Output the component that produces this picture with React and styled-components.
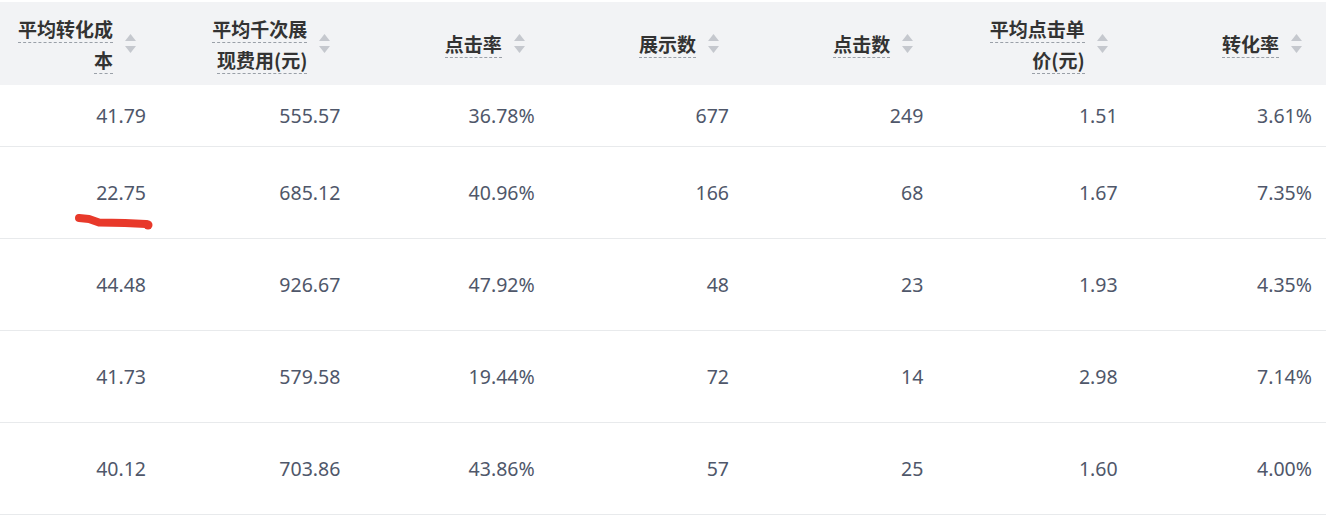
import styled, { createGlobalStyle } from 'styled-components'

const GlobalStyle = createGlobalStyle`
  html, body {
    margin: 0;
    padding: 0;
    background: #ffffff;
  }
  body {
    font-family: "Noto Sans", "Noto Sans CJK SC", sans-serif;
  }
`;

const Wrapper = styled.div`
  width: 1326px;
  padding-top: 2px;
  background: #ffffff;
  overflow: hidden;
`;

const Row = styled.div`
  display: grid;
  grid-template-columns: 160px repeat(6, 1fr);
  height: ${(props) => props.h}px;
  box-sizing: border-box;
  border-bottom: 1px solid #e8eaec;
`;

const HeaderRow = styled(Row)`
  background: #f2f3f5;
  border-bottom: none;
`;

const HeaderCell = styled.div`
  display: flex;
  flex-direction: row;
  align-items: center;
  justify-content: flex-end;
  gap: 12px;
  padding-right: 24px;
`;

const Label = styled.div`
  max-width: 100px;
  text-align: right;
  font-family: "Noto Sans CJK SC", "Noto Sans", sans-serif;
  font-size: 19px;
  font-weight: 700;
  line-height: 31px;
  color: #333333;
  & span {
    border-bottom: 1px dashed #9aa0a8;
  }
`;

const Cell = styled.div`
  position: relative;
  display: flex;
  align-items: center;
  justify-content: flex-end;
  padding-right: 14px;
  font-family: "Noto Sans", "Noto Sans CJK SC", sans-serif;
  font-size: 19.5px;
  color: #4f576a;
`;

const Mark = styled.svg`
  position: absolute;
  left: 0;
  top: 0;
  pointer-events: none;
`;

const Sorter = () => (
  <svg width="11" height="19" viewBox="0 0 11 19">
    <polygon points="5.5,0 11,7 0,7" fill="#c5c8ce" />
    <polygon points="0,12 11,12 5.5,19" fill="#c5c8ce" />
  </svg>
)

const columns = ['平均转化成本', '平均千次展现费用(元)', '点击率', '展示数', '点击数', '平均点击单价(元)', '转化率'];

const rows = [
  ['41.79', '555.57', '36.78%', '677', '249', '1.51', '3.61%'],
  ['22.75', '685.12', '40.96%', '166', '68', '1.67', '7.35%'],
  ['44.48', '926.67', '47.92%', '48', '23', '1.93', '4.35%'],
  ['41.73', '579.58', '19.44%', '72', '14', '2.98', '7.14%'],
  ['40.12', '703.86', '43.86%', '57', '25', '1.60', '4.00%'],
];

const heights = [62, 92, 92, 92, 92];

const App = () => {
  return (
    <Wrapper>
      <GlobalStyle />
      <HeaderRow h={83}>
        {columns.map((title) => (
          <HeaderCell key={title}>
            <Label><span>{title}</span></Label>
            <Sorter />
          </HeaderCell>
        ))}
      </HeaderRow>
      {rows.map((row, i) => (
        <Row key={i} h={heights[i]}>
          {row.map((value, j) => (
            <Cell key={j}>
              {value}
              {i === 1 && j === 0 && (
                <Mark width="160" height="92" viewBox="0 0 160 92">
                  <path d="M79 71 L 89 72 L 99 75.5 L 125 76 L 146 77" stroke="#e8392a" strokeWidth="8" strokeLinecap="round" strokeLinejoin="round" fill="none" />
                  <circle cx="148" cy="78" r="4.5" fill="#e8392a" />
                </Mark>
              )}
            </Cell>
          ))}
        </Row>
      ))}
    </Wrapper>
  )
}

export default App
